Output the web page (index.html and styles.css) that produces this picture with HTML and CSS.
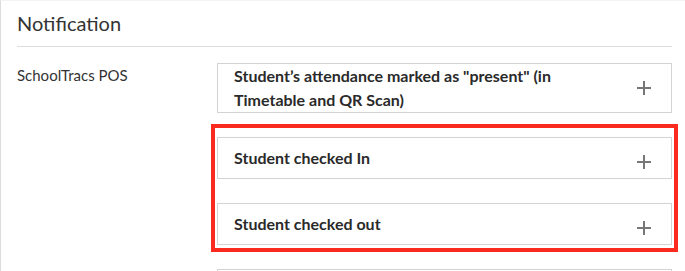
FILE: index.html
```html
<!DOCTYPE html>
<html>
<head>
<meta charset="utf-8">
<link rel="stylesheet" href="styles.css">
</head>
<body>
<div class="panel">
  <h2 class="title">Notification</h2>
  <div class="row">
    <div class="label">SchoolTracs POS</div>
    <div class="list">
      <div class="item">
        <div class="item-text">Student’s attendance marked as "present" (in Timetable and QR Scan)</div>
        <svg class="plus" width="14" height="14" viewBox="0 0 14 14"><path d="M7 0v14M0 7h14" stroke="#777" stroke-width="2"/></svg>
      </div>
      <div class="group highlight">
        <div class="item">
          <div class="item-text">Student checked In</div>
          <svg class="plus" width="14" height="14" viewBox="0 0 14 14"><path d="M7 0v14M0 7h14" stroke="#777" stroke-width="2"/></svg>
        </div>
        <div class="item">
          <div class="item-text">Student checked out</div>
          <svg class="plus" width="14" height="14" viewBox="0 0 14 14"><path d="M7 0v14M0 7h14" stroke="#777" stroke-width="2"/></svg>
        </div>
      </div>
      <div class="item item-partial"></div>
    </div>
  </div>
</div>
</body>
</html>
```
FILE: styles.css
```css
html, body {
  margin: 0;
  padding: 0;
  background: #fff;
  overflow: hidden;
}
body {
  font-family: Lato, "Open Sans", sans-serif;
  color: #333;
  height: 271px;
}
.panel {
  border-left: 1px solid #dcdcdc;
  border-top: 1px solid #f3f3f3;
  padding: 0 13px 0 16px;
  height: 100%;
  box-sizing: border-box;
}
.title {
  margin: 0;
  font-size: 20px;
  font-weight: 400;
  line-height: 24px;
  padding: 10px 0 11px;
  border-bottom: 1px solid #dedede;
  color: #333;
}
.row {
  display: flex;
  margin-top: 16px;
}
.label {
  width: 200px;
  flex: none;
  font-size: 15px;
  line-height: 24px;
  color: #333;
}
.list {
  flex: 1;
  display: flex;
  flex-direction: column;
  gap: 24px;
}
.group {
  display: flex;
  flex-direction: column;
  gap: 24px;
}
.highlight {
  position: relative;
}
.highlight::before {
  content: "";
  position: absolute;
  top: -13px;
  left: -6px;
  right: -6px;
  bottom: -7px;
  border: 4px solid #fa2a1e;
  pointer-events: none;
}
.item {
  display: flex;
  align-items: center;
  min-height: 42px;
  box-sizing: border-box;
  border: 1px solid #d3d3d3;
  padding: 0 20px 0 16px;
  background: #fff;
}
.item-text {
  flex: 1;
  font-size: 16px;
  font-weight: 700;
  line-height: 24px;
  color: #2a2a2a;
  margin-right: 40px;
}
.plus {
  flex: none;
  align-self: flex-start;
  margin-top: 17px;
  display: block;
}
```
